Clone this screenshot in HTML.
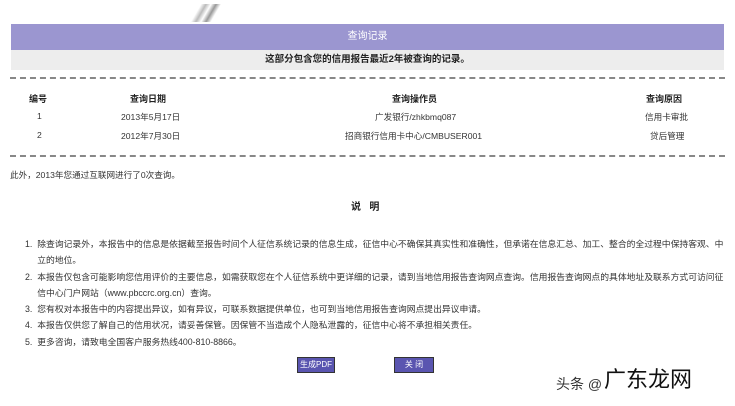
<!DOCTYPE html>
<html><head><meta charset="utf-8"><style>
body{margin:0;width:735px;height:406px;background:#fff;font-family:"Liberation Sans","Noto Sans CJK SC",sans-serif;color:#222;position:relative;overflow:hidden;font-size:8.5px}
.a{position:absolute;white-space:nowrap}
.dash{position:absolute;left:10px;width:715px;border-top:2px dashed #888;height:0}
.btn{position:absolute;background:#5a55b0;color:#fff;font-size:8px;text-align:center;line-height:14px;border:1px solid #333;height:14px}
.s{font-size:8.6px;color:#333}
</style></head><body>
<div class="a" style="left:186px;top:4px;width:40px;height:18px;background:linear-gradient(120deg,transparent 30%,#bbb 40%,transparent 50%,#999 60%,transparent 70%)"></div>
<div class="a" style="left:11px;top:24px;width:713px;height:26px;background:#9b96d0;color:#fff;text-align:center;line-height:26px;font-size:10px">查询记录</div>
<div class="a" style="left:11px;top:50px;width:713px;height:20px;background:#ededed;text-align:center;line-height:20px;font-size:9.5px;font-weight:bold">这部分包含您的信用报告最近2年被查询的记录。</div>
<div class="dash" style="top:77px"></div>
<div class="a" style="left:29px;top:92px;font-weight:bold;font-size:9px">编号</div>
<div class="a" style="left:130px;top:92px;font-weight:bold;font-size:9px">查询日期</div>
<div class="a" style="left:392px;top:92px;font-weight:bold;font-size:9px">查询操作员</div>
<div class="a" style="left:646px;top:92px;font-weight:bold;font-size:9px">查询原因</div>
<div class="a s" style="left:37px;top:111px">1</div>
<div class="a s" style="left:121px;top:111px">2013年5月17日</div>
<div class="a s" style="left:375px;top:111px">广发银行/zhkbmq087</div>
<div class="a s" style="left:645px;top:111px">信用卡审批</div>
<div class="a s" style="left:37px;top:130px">2</div>
<div class="a s" style="left:121px;top:130px">2012年7月30日</div>
<div class="a s" style="left:345px;top:130px">招商银行信用卡中心/CMBUSER001</div>
<div class="a s" style="left:650px;top:130px">贷后管理</div>
<div class="dash" style="top:155px"></div>
<div class="a s" style="left:10px;top:169px">此外，2013年您通过互联网进行了0次查询。</div>
<div class="a" style="left:351px;top:198px;font-size:10px;font-weight:bold">说&nbsp;&nbsp;&nbsp;明</div>
<div class="a s" style="left:25px;top:236px;font-size:8.8px;line-height:16.3px;white-space:normal;width:705px">
1.&nbsp;&nbsp;除查询记录外，本报告中的信息是依据截至报告时间个人征信系统记录的信息生成，征信中心不确保其真实性和准确性，但承诺在信息汇总、加工、整合的全过程中保持客观、中<br>&nbsp;&nbsp;&nbsp;&nbsp;&nbsp;立的地位。<br>
2.&nbsp;&nbsp;本报告仅包含可能影响您信用评价的主要信息，如需获取您在个人征信系统中更详细的记录，请到当地信用报告查询网点查询。信用报告查询网点的具体地址及联系方式可访问征<br>&nbsp;&nbsp;&nbsp;&nbsp;&nbsp;信中心门户网站（www.pbccrc.org.cn）查询。<br>
3.&nbsp;&nbsp;您有权对本报告中的内容提出异议，如有异议，可联系数据提供单位，也可到当地信用报告查询网点提出异议申请。<br>
4.&nbsp;&nbsp;本报告仅供您了解自己的信用状况，请妥善保管。因保管不当造成个人隐私泄露的，征信中心将不承担相关责任。<br>
5.&nbsp;&nbsp;更多咨询，请致电全国客户服务热线400-810-8866。</div>
<div class="btn" style="left:297px;top:357px;width:36px">生成PDF</div>
<div class="btn" style="left:394px;top:357px;width:38px">关 闭</div>
<div class="a" style="left:556px;top:374px;font-size:14px;color:#333">头条 @</div>
<div class="a" style="left:604px;top:362px;font-size:22px;color:#111">广东龙网</div>
</body></html>
